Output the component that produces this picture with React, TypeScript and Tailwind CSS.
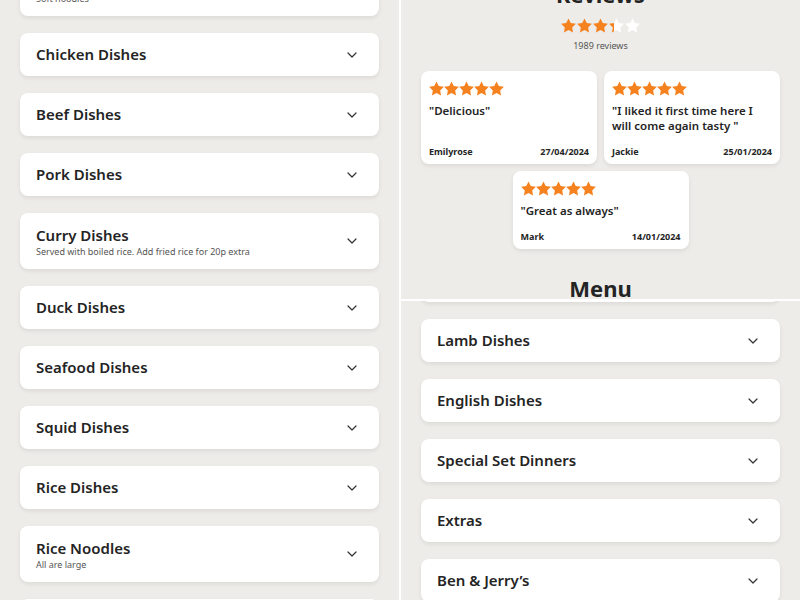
import React from 'react';

type Category = {
  name: string;
  note?: string;
};

type Review = {
  text: string;
  author: string;
  date: string;
};

const leftCategories: Category[] = [
  { name: 'Egg Noodles', note: 'Soft noodles' },
  { name: 'Chicken Dishes' },
  { name: 'Beef Dishes' },
  { name: 'Pork Dishes' },
  { name: 'Curry Dishes', note: 'Served with boiled rice. Add fried rice for 20p extra' },
  { name: 'Duck Dishes' },
  { name: 'Seafood Dishes' },
  { name: 'Squid Dishes' },
  { name: 'Rice Dishes' },
  { name: 'Rice Noodles', note: 'All are large' },
  { name: 'Soft Noodles' },
];

const rightCategories: Category[] = [
  { name: 'Vegetable Dishes' },
  { name: 'Lamb Dishes' },
  { name: 'English Dishes' },
  { name: 'Special Set Dinners' },
  { name: 'Extras' },
  { name: 'Ben & Jerry’s' },
];

const reviews: Review[] = [
  { text: '"Delicious"', author: 'Emilyrose', date: '27/04/2024' },
  { text: '"I liked it first time here I will come again tasty  "', author: 'Jackie', date: '25/01/2024' },
  { text: '"Great as always"', author: 'Mark', date: '14/01/2024' },
];

const STAR = 'M12 2.2l2.95 6.1 6.7.95-4.85 4.7 1.15 6.65L12 17.45 6.05 20.6l1.15-6.65-4.85-4.7 6.7-.95L12 2.2z';

// fill: 0..1 portion of the star painted orange
function Star({ fill = 1, size = 15 }: { fill?: number; size?: number }) {
  const id = `star-${Math.round(fill * 100)}`;
  return (
    <svg width={size} height={size} viewBox="2.2 2 19.6 19">
      <defs>
        <linearGradient id={id} x1="0" x2="1" y1="0" y2="0">
          <stop offset={fill} stopColor="#f5821f" />
          <stop offset={fill} stopColor="#ffffff" />
        </linearGradient>
      </defs>
      <path d={STAR} fill={`url(#${id})`} />
    </svg>
  );
}

function Chevron() {
  return (
    <svg width="10" height="6" viewBox="0 0 10 6" fill="none" className="shrink-0">
      <path d="M1 1l4 4 4-4" stroke="#333" strokeWidth="1.2" strokeLinecap="round" strokeLinejoin="round" />
    </svg>
  );
}

function CategoryCard({ item }: { item: Category }) {
  return (
    <div
      className={`flex items-center justify-between bg-white rounded-lg shadow-[0_2px_4px_rgba(0,0,0,0.08)] pl-4 pr-[22px] ${
        item.note ? 'h-[56px]' : 'h-[43px]'
      }`}
    >
      <div className="flex flex-col">
        <span className="text-[15px] leading-[21px] font-semibold text-[#242424]">{item.name}</span>
        {item.note && (
          <span className="text-[9px] leading-[12px] text-[#555]">{item.note}</span>
        )}
      </div>
      <Chevron />
    </div>
  );
}

function ReviewCard({ review }: { review: Review }) {
  return (
    <div className="w-[176px] bg-white rounded-lg shadow-[0_2px_4px_rgba(0,0,0,0.08)] flex flex-col px-2 pt-[9px] pb-[6px]">
      <div className="flex h-[16px] items-center">
        {[0, 1, 2, 3, 4].map((i) => (
          <Star key={i} size={15} />
        ))}
      </div>
      <p className="mt-[7px] mb-[13px] text-[11.5px] leading-[15px] font-semibold text-[#242424]">
        {review.text}
      </p>
      <div className="mt-auto flex justify-between text-[9px] leading-[12px] font-bold text-[#242424]">
        <span>{review.author}</span>
        <span>{review.date}</span>
      </div>
    </div>
  );
}

export default function App() {
  return (
    <div className="w-[800px] h-[600px] flex bg-[#edece8] overflow-hidden font-['Noto_Sans',sans-serif]">
      {/* Left: scrolled menu list */}
      <div className="w-[399px] h-[600px] overflow-hidden px-5">
        <div className="-mt-[40px] flex flex-col gap-[17px]">
          {leftCategories.map((c) => (
            <CategoryCard key={c.name} item={c} />
          ))}
        </div>
      </div>

      <div className="w-[2px] bg-white" />

      {/* Right: reviews + menu */}
      <div className="flex-1 h-[600px] flex flex-col overflow-hidden">
        <div className="h-[299px] overflow-hidden px-5">
          <div className="-mt-[20px] flex flex-col items-center">
            <h2 className="text-[22px] leading-[28px] font-bold text-[#242424]">Reviews</h2>
            <div className="mt-[10px] flex gap-px">
              <Star size={15} />
              <Star size={15} />
              <Star size={15} />
              <Star size={15} fill={0.3} />
              <Star size={15} fill={0} />
            </div>
            <span className="mt-[6px] text-[9px] leading-[14px] text-[#555]">1989 reviews</span>
            <div className="mt-[18px] w-full flex flex-wrap justify-center gap-[7px]">
              {reviews.map((r) => (
                <ReviewCard key={r.author} review={r} />
              ))}
            </div>
            <h2 className="mt-[25px] text-[22px] leading-[28px] font-bold text-[#242424]">Menu</h2>
          </div>
        </div>

        <div className="h-[2px] bg-white shrink-0" />

        <div className="flex-1 overflow-hidden px-5">
          <div className="-mt-[42px] flex flex-col gap-[17px]">
            {rightCategories.map((c) => (
              <CategoryCard key={c.name} item={c} />
            ))}
          </div>
        </div>
      </div>
    </div>
  );
}
